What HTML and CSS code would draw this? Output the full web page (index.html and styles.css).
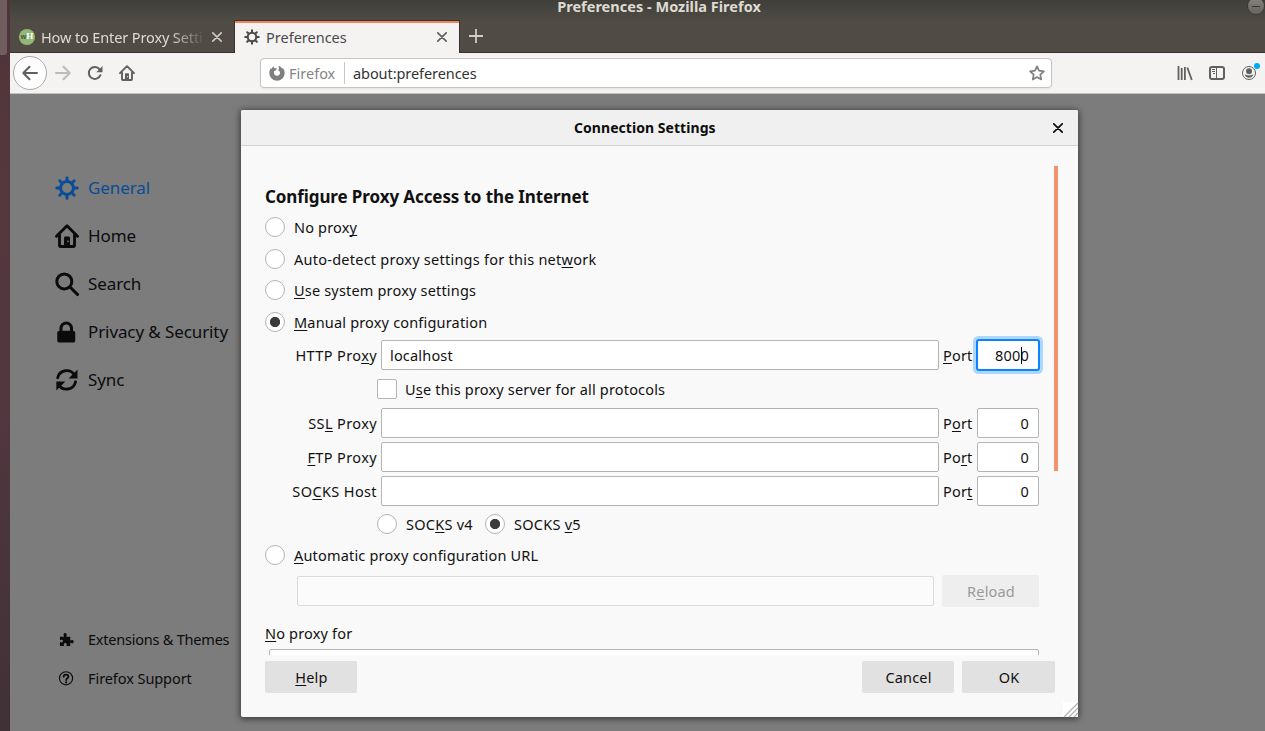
FILE: index.html
```
<!DOCTYPE html>
<html lang="en">
<head>
<meta charset="utf-8">
<title>Preferences - Mozilla Firefox</title>
<link rel="stylesheet" href="styles.css">
</head>
<body>
<svg width="0" height="0" class="defs">
  <defs>
    <symbol id="gear" viewBox="0 0 16 16"><circle cx="8" cy="8" r="4.300" fill="none" stroke="currentColor" stroke-width="2"/><path d="M8 1.200v2.300M8 12.500v2.300M1.200 8h2.300M12.500 8h2.300M3.200 3.200l1.600 1.600M11.200 11.200l1.600 1.600M12.800 3.200l-1.600 1.600M4.800 11.200l-1.600 1.600" fill="none" stroke="currentColor" stroke-width="2" stroke-linecap="round"/></symbol>
    <symbol id="home" viewBox="0 0 16 16"><path d="M1 8.200L8 1.200l7 7M3 7v7.200c0 .5.3.8.8.8h8.400c.5 0 .8-.3.8-.8V7" fill="none" stroke="currentColor" stroke-width="1.900" stroke-linecap="round" stroke-linejoin="round"/><path d="M6 15V9.300c0-.6.4-1 1-1h2c.6 0 1 .4 1 1V15z M8.200 11v1.200h.9V11z" fill-rule="evenodd" fill="currentColor"/></symbol>
    <symbol id="close" viewBox="0 0 10 10"><path d="M.8.8l8.400 8.400M9.200.8L.8 9.200" fill="none" stroke="currentColor" stroke-width="1.700" stroke-linecap="round"/></symbol>
  </defs>
</svg>
<div class="screen">
  <div class="desktop"><div class="dock"></div></div>
  <div class="window">
    <header class="titlebar">
      <div class="window-title">Preferences - Mozilla Firefox</div>
      <div class="minimize"></div>
      <div class="tabs">
        <div class="tab tab-back">
          <span class="favicon"><i>w</i>H</span>
          <span class="tab-label fade">How to Enter Proxy Setti</span>
          <svg class="x"><use href="#close"/></svg>
        </div>
        <div class="tab tab-active">
          <svg class="tab-gear"><use href="#gear"/></svg>
          <span class="tab-label">Preferences</span>
          <svg class="x"><use href="#close"/></svg>
        </div>
        <svg class="plus" viewBox="0 0 14 14"><path d="M7 0v14M0 7h14" stroke="currentColor" stroke-width="1.800"/></svg>
      </div>
    </header>
    <nav class="navbar">
      <div class="back"><svg viewBox="0 0 16 16"><path d="M15 8H1.500M7.500 1.800L1.300 8l6.200 6.200" fill="none" stroke="currentColor" stroke-width="2" stroke-linecap="round" stroke-linejoin="round"/></svg></div>
      <svg class="ico forward" viewBox="0 0 16 16"><path d="M1 8h13.500M8.500 1.800L14.700 8l-6.200 6.200" fill="none" stroke="currentColor" stroke-width="2" stroke-linecap="round" stroke-linejoin="round"/></svg>
      <svg class="ico reload" viewBox="0 0 16 16"><path d="M13.400 10.200A6 6 0 1 1 12.600 4.300" fill="none" stroke="currentColor" stroke-width="2" stroke-linecap="round"/><path d="M15.500 1v6.200H9.300z" fill="currentColor"/></svg>
      <svg class="ico"><use href="#home"/></svg>
      <div class="urlbar">
        <svg class="fox" viewBox="0 0 16 16"><path d="M4.500 1.200L5.300 3 8 3.400 6.600 5.500 5 6c-.5 3 .9 4.700 3 4.700 2 0 3.200-1.500 3-3.200C10.800 6 9.500 5.500 8.800 5.600 9.200 4.700 10 4.200 10 4.200L9.500.8c2.500.9 3.600 2.500 3.800 3l.5-.8c1.200 1.500 1.900 3 1.900 5A7.700 7.700 0 0 1 .3 8c0-2 .5-3.300 1.500-4.800L2.300 4z" fill="currentColor"/></svg>
        <span class="identity">Firefox</span>
        <span class="url">about:preferences</span>
        <svg class="star" viewBox="0 0 16 16"><path d="M8 1.300l2 4.400 4.900.6-3.600 3.300.9 4.900L8 12.100l-4.200 2.400.9-4.900L1.100 6.300 6 5.700z" fill="none" stroke="currentColor" stroke-width="1.700" stroke-linejoin="round"/></svg>
      </div>
      <div class="tools">
        <svg viewBox="0 0 16 16"><path d="M1.500 1v14M4.700 3v12M7.900 2v13M10.300 2.500L14.800 15" fill="none" stroke="currentColor" stroke-width="1.800"/></svg>
        <svg viewBox="0 0 16 16"><rect x="1" y="2" width="14" height="12" rx="2" fill="none" stroke="currentColor" stroke-width="2"/><path d="M7.500 2v12M3 4.500h3M3 6.500h3M4 8.500h2" stroke="currentColor"/></svg>
        <svg class="account" viewBox="0 0 18 18"><circle cx="8" cy="10" r="6.500" fill="none" stroke="currentColor"/><circle cx="8" cy="8.200" r="3" fill="currentColor"/><path d="M3.700 11.300c1.500.5 2 1.200 4.300 1.200s2.800-.7 4.300-1.200C12 13.500 10 14.700 8 14.700s-4-1.200-4.300-3.400z" fill="currentColor"/><circle cx="16" cy="3" r="3" fill="#00aaf8"/></svg>
      </div>
    </nav>
    <main class="page">
      <aside class="sidebar">
        <div class="cat selected"><svg><use href="#gear"/></svg><span>General</span></div>
        <div class="cat"><svg><use href="#home"/></svg><span>Home</span></div>
        <div class="cat"><svg viewBox="0 0 16 16"><circle cx="6.200" cy="6.300" r="5" fill="none" stroke="currentColor" stroke-width="2"/><path d="M10 10l5 5" stroke="currentColor" stroke-width="2.100" stroke-linecap="round"/></svg><span>Search</span></div>
        <div class="cat"><svg viewBox="0 0 16 16"><path d="M3 7.200V5.500a4.300 4.300 0 0 1 9 0v1.700c.8 0 1.500.6 1.500 1.400v5c0 .9-.6 1.400-1.500 1.400H3c-.9 0-1.500-.5-1.500-1.400v-5c0-.8.7-1.400 1.500-1.400zm2 0h5V5.600c0-3.400-5-3.400-5 0z" fill="currentColor"/></svg><span>Privacy &amp; Security</span></div>
        <div class="cat"><svg viewBox="0 0 16 16"><path d="M1.800 6.500C3 1 10.200.2 12.800 4.500M13.700 9.200C12.500 15 5 15.500 2.700 11.300" fill="none" stroke="currentColor" stroke-width="1.900" stroke-linecap="round"/><path d="M15 1v6H9zM.9 15V9h6z" fill="currentColor"/></svg><span>Sync</span></div>
        <div class="links">
          <div class="link"><svg viewBox="0 0 16 16"><path d="M1 5h3.800c.7 0 .7-.5.3-1.200C4.400 2.500 5 1 6.500 1S8.600 2.500 8 3.800c-.4.700-.4 1.200.3 1.200H12v3.500c0 .7.500.7 1.200.3 1.200-.6 2.400.1 2.400 1.500s-1.200 2.100-2.400 1.500c-.7-.4-1.200-.4-1.200.3V15H8.300c-.5 0-.5-.5-.2-1 .6-1.200 0-2.300-1.400-2.300s-2 1.100-1.400 2.300c.3.500.3 1-.3 1H1v-3.800c0-.5.4-.6 1-.3 1.300.5 2.200-.1 2.200-1.200S3.300 8 2 8.500c-.6.300-1 .2-1-.3z" fill="currentColor"/></svg><span class="tight">Extensions &amp; Themes</span></div>
          <div class="link"><svg viewBox="0 0 16 16"><circle cx="7.500" cy="7.800" r="7" fill="none" stroke="currentColor" stroke-width="1.200"/><path d="M5 6.200C5 3 10 3 10 6c0 1.700-2.400 1.800-2.400 3.600" fill="none" stroke="currentColor" stroke-width="1.900" stroke-linecap="round"/><circle cx="7.600" cy="12" r="1.200" fill="currentColor"/></svg><span>Firefox Support</span></div>
        </div>
      </aside>
      <section class="dialog">
        <div class="dialog-title"><span>Connection Settings</span><svg class="dialog-x"><use href="#close"/></svg></div>
        <div class="dialog-body">
          <form class="form">
            <h2><span>Configure Proxy Access to the Internet</span></h2>
            <div class="opt"><i class="radio"></i><span class="t">No prox<u>y</u></span></div>
            <div class="opt gap12"><i class="radio"></i><span class="t wide">Auto-detect proxy settings for this net<u>w</u>ork</span></div>
            <div class="opt gap11"><i class="radio"></i><span class="t"><u>U</u>se system proxy settings</span></div>
            <div class="opt gap12"><i class="radio on"></i><span class="t"><u>M</u>anual proxy configuration</span></div>
            <div class="row http"><label><span class="t">HTTP Pro<u>x</u>y</span></label><div class="field host"><span class="t">localhost</span></div><span class="port"><span class="t"><u>P</u>ort</span></span><div class="field num focus"><span class="t">800</span><b class="caret"></b><span class="t">0</span></div></div>
            <div class="opt inner share"><i class="check"></i><span class="t">U<u>s</u>e this proxy server for all protocols</span></div>
            <div class="row ssl"><label><span class="t">SS<u>L</u> Proxy</span></label><div class="field host"></div><span class="port"><span class="t">P<u>o</u>rt</span></span><div class="field num"><span class="t">0</span></div></div>
            <div class="row"><label><span class="t"><u>F</u>TP Proxy</span></label><div class="field host"></div><span class="port"><span class="t">Po<u>r</u>t</span></span><div class="field num"><span class="t">0</span></div></div>
            <div class="row"><label><span class="t">SO<u>C</u>KS Host</span></label><div class="field host"></div><span class="port"><span class="t">Por<u>t</u></span></span><div class="field num"><span class="t">0</span></div></div>
            <div class="opt inner versions"><i class="radio"></i><span class="t wide v4">SOC<u>K</u>S v4</span><i class="radio on"></i><span class="t wide">SOCKS <u>v</u>5</span></div>
            <div class="opt gap11"><i class="radio"></i><span class="t"><u>A</u>utomatic proxy configuration URL</span></div>
            <div class="pac"><div class="field off"></div><div class="btn disabled"><span class="t">R<u>e</u>load</span></div></div>
            <div class="noproxy"><span class="t"><u>N</u>o proxy for</span></div>
            <div class="area"></div>
          </form>
          <div class="thumb"></div>
        </div>
        <div class="buttons">
          <div class="btn help"><span class="t"><u>H</u>elp</span></div>
          <div class="btn"><span class="t">Cancel</span></div>
          <div class="btn ok"><span class="t">OK</span></div>
        </div>
        <svg class="grip" viewBox="0 0 15 15"><rect width="15" height="15" fill="#fff"/><path d="M1 15L15 1M6 15l9-9M11 15l4-4" stroke="#b0b0b0" stroke-width="1.300"/></svg>
      </section>
    </main>
  </div>
</div>
</body>
</html>
```
FILE: styles.css
```
* { box-sizing: border-box; }
body { margin: 0; font: 14.5px/20px "Noto Sans", "Open Sans", sans-serif; color: #111; overflow: hidden; }
svg { display: block; flex: none; overflow: visible; }
.defs { position: absolute; }
.screen { display: flex; width: 1265px; height: 731px; }
.desktop { width: 10px; background: linear-gradient(#4d343a, #55383e 25%, #52373f 55%, #3f3136); }
.dock { width: 7px; height: 55px; background: #715c60; border-radius: 0 0 3px 0; }
.window { width: 1255px; display: flex; flex-direction: column; }

.titlebar { position: relative; height: 53px; background: linear-gradient(#403f3a, #504c45 22px); display: flex; flex-direction: column; border-bottom: 1px solid #3a302e; }
.window-title { height: 20px; padding-left: 43px; margin-top: -4px; line-height: 20px; text-align: center; color: #dfdbd2; font-weight: 700; font-size: 14.5px; letter-spacing: .02px; }
.minimize { position: absolute; right: 1px; top: -2px; width: 16px; height: 16px; border-radius: 50%; background: linear-gradient(#85837c, #66645d); box-shadow: 0 0 0 1px #3b3a35; }
.minimize::after { content: ""; display: block; width: 8px; height: 1px; margin: 8px 4px; background: #33322e; }
.tabs { display: flex; flex: none; height: 32px; margin-top: 5px; }
.tab { display: flex; align-items: center; height: 32px; }
.tab-label { flex: 1; white-space: nowrap; overflow: hidden; margin-top: -1px; }
.tab-back { width: 225px; padding: 0 13px 0 9px; color: #dfdbd2; }
.tab-back .tab-label { letter-spacing: -.12px; }
.favicon { width: 16px; height: 16px; border-radius: 50%; background: #93b874; color: #fff; font: 700 9px/15px "Liberation Serif", serif; text-align: center; margin-right: 6px; }
.favicon i { color: #41513a; font: 700 7px/15px "Liberation Sans", sans-serif; }
.fade { -webkit-mask-image: linear-gradient(90deg, #000 78%, transparent 100%); mask-image: linear-gradient(90deg, #000 78%, transparent 100%); }
.x { width: 10px; height: 10px; margin-left: 6px; color: #c9c6be; }
.tab-active { width: 224px; background: #f4f3f2; color: #4a4a4a; border-top: 2px solid #f08557; padding: 0 12px 2px 9px; box-shadow: 0 0 0 1px #3a302e; clip-path: inset(-1px -1px 0 -1px); }
.tab-active .x { color: #606060; }
.tab-gear { width: 16px; height: 16px; margin-right: 6px; color: #4a4a4a; }
.plus { width: 14px; height: 14px; margin: 8px 0 0 10px; color: #d0cdc5; }

.navbar { height: 41px; background: #f4f3f2; border-bottom: 1px solid #c4c3c1; display: flex; align-items: center; color: #606060; }
.back { flex: none; width: 34px; height: 34px; margin-left: 3px; border-radius: 50%; border: 1px solid #aaa; background: #fdfdfd; display: flex; align-items: center; justify-content: center; }
.back svg { width: 16px; height: 16px; }
.ico { width: 16px; height: 16px; margin-right: 16px; }
.forward { color: #bcbbba; margin-left: 8px; }
.urlbar { flex: none; width: 792px; height: 30px; margin-left: 109px; background: #fff; border: 1px solid #c5c4c2; border-radius: 4px; display: flex; align-items: center; padding: 0 6px 0 8px; box-shadow: 0 1px 2px #0001; }
.fox { width: 16px; height: 16px; color: #7f7f7f; margin-right: 4px; }
.identity { width: 56px; height: 22px; line-height: 22px; color: #858585; border-right: 1px solid #c8c8c8; margin-right: 8px; }
.url { flex: 1; color: #333; letter-spacing: -.07px; }
.star { width: 16px; height: 16px; color: #7f7f7f; }
.tools { display: flex; gap: 16px; margin-left: 125px; align-items: center; }
.tools svg { width: 16px; height: 16px; }
.tools .account { width: 18px; height: 18px; margin-top: -2px; }

.page { position: relative; height: 637px; background: #7c7c7c; overflow: hidden; }
.sidebar { padding: 70px 0 0 45px; height: 637px; display: flex; flex-direction: column; color: #0b0b0d; }
.cat { display: flex; align-items: center; height: 48px; font-size: 17px; letter-spacing: -.1px; }
.cat svg { width: 24px; height: 24px; margin-right: 9px; }
.selected { color: #0a4d96; }
.links { margin-top: 216px; }
.link { display: flex; align-items: center; height: 39px; padding-left: 4px; }
.link svg { width: 15px; height: 15px; margin-right: 14px; }
.link span { margin-top: -2px; letter-spacing: -.07px; }
.link .tight { letter-spacing: -.22px; }

.dialog { position: absolute; left: 231px; top: 16px; width: 837px; height: 607px; background: #f9f9f9; border-radius: 2px; box-shadow: 0 1px 6px 1px #0008; }
.dialog-title { height: 36px; display: flex; align-items: center; background: #f0f0f0; border-bottom: 1px solid #d2d2d2; border-radius: 2px 2px 0 0; font-weight: 700; font-size: 14px; letter-spacing: .05px; padding: 0 15px 0 333px; color: #0c0c0d; }
.dialog-x { width: 10px; height: 10px; margin-left: auto; }
.dialog-body { height: 509px; overflow: hidden; display: flex; padding-left: 24px; }
.form { width: 774px; padding-top: 36px; }
.form h2 { margin: 0; height: 35px; line-height: 30px; font-size: 17px; letter-spacing: -.1px; }
.thumb { width: 4px; height: 305px; margin: 20px 0 0 15px; background: #f4926b; }
.t { display: block; white-space: pre; letter-spacing: .18px; }
.wide { letter-spacing: .25px; }
.t u { text-decoration-thickness: 1px; text-underline-offset: 2px; text-decoration-skip-ink: none; }
.opt { display: flex; align-items: center; height: 20px; }
.gap12 { margin-top: 12px; }
.gap11 { margin-top: 11px; }
.radio { flex: none; width: 20px; height: 20px; border: 1px solid #b4b4b4; border-radius: 50%; background: #fff; margin-right: 9px; }
.on { background: radial-gradient(circle at center, #3b3b3b 4.700px, #fff 5.500px); }
.check { flex: none; width: 20px; height: 20px; border: 1px solid #b4b4b4; border-radius: 2px; background: #fff; margin-right: 8px; }
.inner { padding-left: 112px; }
.row { display: flex; align-items: center; height: 30px; margin-top: 4px; }
.http { margin-top: 8px; }
.share, .ssl { margin-top: 9px; }
.row label { width: 112px; display: flex; justify-content: flex-end; margin-right: 4px; }
.row label .t { letter-spacing: .38px; }
.field { height: 30px; border: 1px solid #b4b4b4; border-radius: 2px; background: #fff; display: flex; align-items: center; padding: 0 9px 0 8px; }
.host { width: 558px; }
.port { width: 34px; margin: 0 0 0 4px; }
.num { width: 62px; justify-content: flex-end; }
.focus { border-color: #0a84ff; box-shadow: 0 0 0 1px #0a84ff, 0 0 0 4px #aed6ff; }
.caret { width: 1px; height: 17px; margin: 0 -1px 0 0; background: #000; }
.versions { margin-top: 8px; }
.v4 { width: 79px; }
.pac { display: flex; align-items: center; height: 32px; margin: 10px 0 0 32px; gap: 8px; }
.off { width: 637px; background: #fbfbfb; border-color: #dadada; }
.btn { width: 92px; height: 32px; border-radius: 2px; background: #e1e1e1; display: flex; align-items: center; justify-content: center; padding-left: 1px; }
.disabled { width: 97px; background: #eee; color: #999; }
.noproxy { height: 20px; margin-top: 16px; }
.area { height: 60px; margin: 6px 0 0 4px; background: #fff; border: 1px solid #b4b4b4; border-radius: 2px; }
.buttons { display: flex; gap: 8px; padding: 6px 23px 24px 24px; }
.help { margin-right: auto; }
.ok { width: 93px; }
.grip { position: absolute; right: 0; bottom: 0; width: 15px; height: 15px; }
```
